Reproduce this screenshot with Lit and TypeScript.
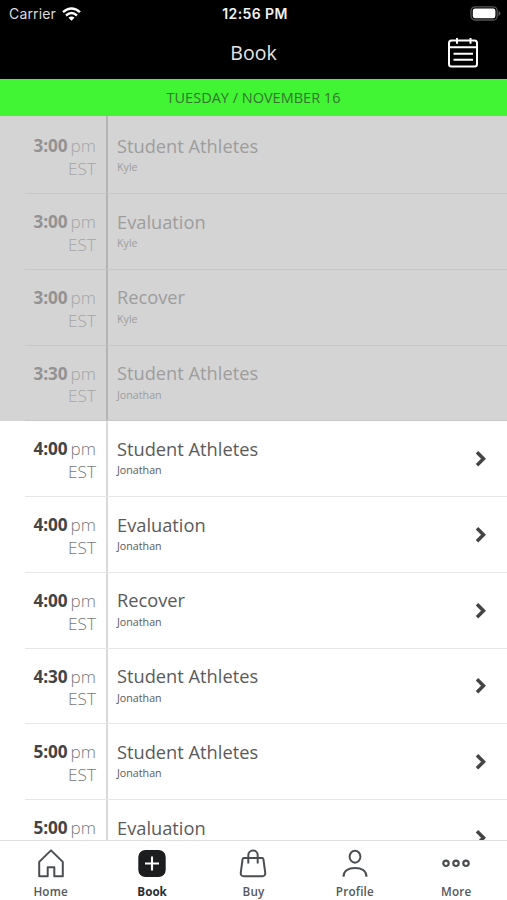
import { LitElement, html, css, svg } from "lit";
import { customElement, property } from "lit/decorators.js";
import { classMap } from "lit/directives/class-map.js";

interface Slot {
  time: string;
  title: string;
  coach: string;
  past?: boolean;
}

const SLOTS: Slot[] = [
  { time: "3:00", title: "Student Athletes", coach: "Kyle", past: true },
  { time: "3:00", title: "Evaluation", coach: "Kyle", past: true },
  { time: "3:00", title: "Recover", coach: "Kyle", past: true },
  { time: "3:30", title: "Student Athletes", coach: "Jonathan", past: true },
  { time: "4:00", title: "Student Athletes", coach: "Jonathan" },
  { time: "4:00", title: "Evaluation", coach: "Jonathan" },
  { time: "4:00", title: "Recover", coach: "Jonathan" },
  { time: "4:30", title: "Student Athletes", coach: "Jonathan" },
  { time: "5:00", title: "Student Athletes", coach: "Jonathan" },
  { time: "5:00", title: "Evaluation", coach: "Jonathan" },
];

const ICONS = {
  Home: svg`<path d="M3.200 27.200V12.900L15 1.400l11.800 11.500V27.200H18.300V18.300H11.700V27.200Z"/>`,
  Book: svg`<rect x="1.300" y="1" width="27.400" height="27" rx="7" fill="#1b1d1f" stroke="none"/><path d="M15 7.500v14M8 14.500h14" stroke="#fff" stroke-width="2.100"/>`,
  Buy: svg`<path d="M5.800 9H24.200q1 0 1.200 1.100L27.200 23.400q.4 3.800-3 3.800H5.800q-3.400 0-3-3.800L4.600 10.100Q4.800 9 5.800 9ZM10.300 14.500V6.200a4.700 4.700 0 0 1 9.400 0V14.500"/>`,
  Profile: svg`<ellipse cx="15" cy="7.700" rx="5.400" ry="6"/><path d="M3.500 27.700c0-6 5-8.700 11.500-8.700s11.500 2.700 11.500 8.700"/>`,
  More: svg`<g stroke-width="2.200"><circle cx="5" cy="14.300" r="2.700"/><circle cx="15" cy="14.300" r="2.700"/><circle cx="25" cy="14.300" r="2.700"/></g>`,
};

@customElement("status-bar")
class StatusBar extends LitElement {
  static styles = css`
    :host { display: grid; grid-template-columns: 1fr auto 1fr; align-items: center; height: 27px; padding: 0 6px 0 9px; color: #fff; font-family: Inter, sans-serif; font-size: 14px; }
    .carrier { display: flex; align-items: center; gap: 6px; color: #dcdcdc; letter-spacing: .15px; }
    .clock { font-weight: 600; font-size: 14px; letter-spacing: .4px; color: #f2f2f2; }
    .battery { justify-self: end; }
    svg { display: block; }
  `;
  render() {
    return html`
      <div class="carrier"><span>Carrier</span>
        <svg width="19" height="14" viewBox="0 0 19 14" fill="none" stroke="#fff" stroke-width="2.400"><path d="M1 5.200Q9.500-2.400 18 5.200M4 8.500Q9.500 3.700 15 8.500"/><path d="M9.500 13.700 6.500 10.700Q9.500 8.400 12.500 10.700Z" fill="#fff" stroke="none"/></svg>
      </div>
      <div class="clock">12:56 PM</div>
      <svg class="battery" width="31" height="15" viewBox="0 0 31 15"><rect x="1" y=".8" width="26.200" height="13.200" rx="4" fill="none" stroke="#555" stroke-width="1.300"/><rect x="2.800" y="2.500" width="22.600" height="9.800" rx="2.300" fill="#fff"/><path d="M28.500 5v5q2-.8 2-2.500T28.500 5Z" fill="#555"/></svg>
    `;
  }
}

@customElement("class-row")
class ClassRow extends LitElement {
  @property({ attribute: false }) slotData!: Slot;
  static styles = css`
    :host { display: block; }
    .row { display: grid; grid-template-columns: 96px 1fr 34px; height: 75.750px; box-sizing: border-box; background: linear-gradient(#e6e6e6, #e6e6e6) 25px 100% / 100% 1px no-repeat; color: #5a5a5a; }
    .when { padding-top: 17px; text-align: right; line-height: 22.700px; font-size: 17.200px; white-space: nowrap; }
    .when b { color: #444; font-weight: 700; letter-spacing: -.1px; }
    .light { font-weight: 300; color: #777; }
    .pm { margin-left: 3px; }
    .what { padding: 15.700px 0 0 21px; }
    .title { font-size: 18.250px; line-height: 24px; }
    .coach { font-size: 10.700px; line-height: 16px; margin-top: 1.300px; }
    .arrow { align-self: center; display: block; }
    .past { color: #9d9d9d; background-image: linear-gradient(#c7c7c7, #c7c7c7); }
    .past b { color: #929292; }
    .past .light { color: #a5a5a5; }
  `;
  render() {
    const s = this.slotData;
    return html`<div class=${classMap({ row: true, past: !!s.past })}>
      <div class="when"><b>${s.time}</b><span class="light pm">pm</span><div class="light">EST</div></div>
      <div class="what"><div class="title">${s.title}</div><div class="coach">${s.coach}</div></div>
      ${s.past ? "" : html`<svg class="arrow" width="16" height="18" viewBox="0 0 16 18" fill="none" stroke="#444" stroke-width="3.500"><path d="M4 2.300 10.500 8.800 4 15.300"/></svg>`}
    </div>`;
  }
}

@customElement("tab-bar")
class TabBar extends LitElement {
  static styles = css`
    :host { display: grid; grid-template-columns: repeat(5, 1fr); height: 60px; box-sizing: border-box; border-top: 1px solid #dedede; background: #fff; color: #55585b; }
    .tab { display: flex; flex-direction: column; align-items: center; padding-top: 8px; font-size: 11.700px; font-weight: 600; line-height: 16px; letter-spacing: .2px; }
    .active { color: #2b2d2f; font-weight: 700; letter-spacing: 0; }
    svg { display: block; margin-bottom: 5px; }
  `;
  render() {
    return html`${Object.entries(ICONS).map(([name, icon]) => html`
      <div class=${classMap({ tab: true, active: name === "Book" })}>
        <svg width="30" height="29" viewBox="0 0 30 29" fill="none" stroke="#4b4e51" stroke-width="2" stroke-linejoin="round">${icon}</svg>
        <span>${name}</span>
      </div>`)}`;
  }
}

@customElement("app-root")
class AppRoot extends LitElement {
  static styles = css`
    :host { display: flex; flex-direction: column; height: 900px; overflow: hidden; background: #fff; font-family: "Open Sans", sans-serif; }
    .top { height: 79px; background: #000; flex: none; }
    .nav { display: grid; grid-template-columns: 1fr auto 1fr; height: 51px; align-items: center; color: #e6e6e6; font-size: 19.500px; }
    .title { grid-column: 2; }
    .calendar { justify-self: end; margin-right: 28px; display: block; }
    .date { flex: none; height: 37px; box-sizing: border-box; background: #42f534; color: #367431; display: flex; align-items: center; justify-content: center; font-size: 14.500px; }
    .list { flex: 1; min-height: 0; overflow: hidden; background: linear-gradient(#00000026, #00000026) 106px 0 / 2px 100% no-repeat, linear-gradient(#d4d4d4, #d4d4d4) 0 0 / 100% 305px no-repeat; padding-top: 2.300px; }
    tab-bar { flex: none; }
  `;
  render() {
    return html`
      <div class="top">
        <status-bar></status-bar>
        <div class="nav">
          <span class="title">Book</span>
          <svg class="calendar" width="32" height="32" viewBox="0 0 32 32" fill="none" stroke="#fff" stroke-width="2"><rect x="2" y="3.600" width="28" height="26" rx="2.500"/><path d="M2 10.300h28M10 1v5.700M23.500 1v5.700M6.500 16.700h19.500M6.500 22.800h19.500"/></svg>
        </div>
      </div>
      <div class="date">TUESDAY / NOVEMBER 16</div>
      <div class="list">${SLOTS.map((s) => html`<class-row .slotData=${s}></class-row>`)}</div>
      <tab-bar></tab-bar>
    `;
  }
}
